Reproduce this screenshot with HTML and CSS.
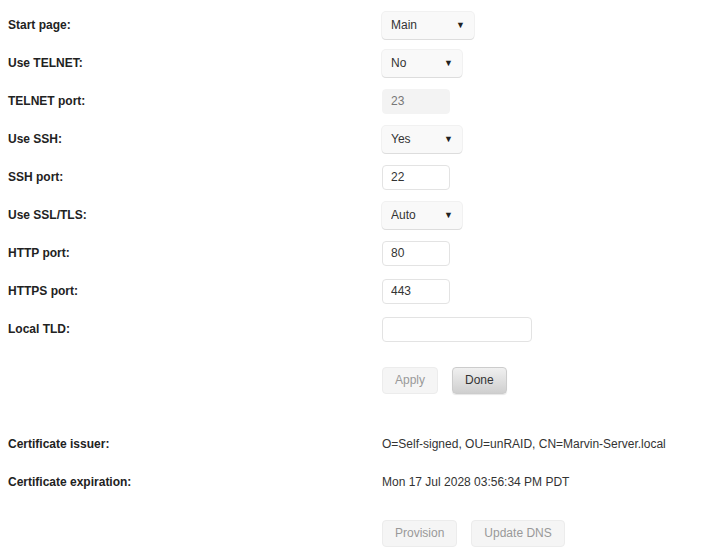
FILE: index.html
```html
<!DOCTYPE html>
<html>
	<head>
		<meta charset="utf-8">
		<title>Management Access</title>
		<link rel="stylesheet" href="styles.css">
	</head>
	<body>
		<form class="settings">
			<div class="row">
				<label class="name">Start page:</label>
				<span class="pick wide">
					<select><option>Main</option><option>Dashboard</option></select>
				</span>
			</div>
			<div class="row">
				<label class="name">Use TELNET:</label>
				<span class="pick">
					<select><option>No</option><option>Yes</option></select>
				</span>
			</div>
			<div class="row">
				<label class="name">TELNET port:</label>
				<input type="text" class="port" value="23" disabled>
			</div>
			<div class="row">
				<label class="name">Use SSH:</label>
				<span class="pick">
					<select><option>Yes</option><option>No</option></select>
				</span>
			</div>
			<div class="row">
				<label class="name">SSH port:</label>
				<input type="text" class="port" value="22">
			</div>
			<div class="row">
				<label class="name">Use SSL/TLS:</label>
				<span class="pick">
					<select><option>Auto</option><option>Yes</option><option>No</option></select>
				</span>
			</div>
			<div class="row">
				<label class="name">HTTP port:</label>
				<input type="text" class="port" value="80">
			</div>
			<div class="row">
				<label class="name">HTTPS port:</label>
				<input type="text" class="port" value="443">
			</div>
			<div class="row">
				<label class="name">Local TLD:</label>
				<input type="text" class="tld" value="">
			</div>
			<div class="row actions">
				<span class="name"></span>
				<button type="button" disabled>Apply</button>
				<button type="button" class="done">Done</button>
			</div>

			<div class="row cert">
				<span class="name">Certificate issuer:</span>
				<span class="value">O=Self-signed, OU=unRAID, CN=Marvin-Server.local</span>
			</div>
			<div class="row">
				<span class="name">Certificate expiration:</span>
				<span class="value">Mon 17 Jul 2028 03:56:34 PM PDT</span>
			</div>
			<div class="row provision">
				<span class="name"></span>
				<button type="button" disabled>Provision</button>
				<button type="button" disabled>Update DNS</button>
			</div>
		</form>
	</body>
</html>
```

FILE: styles.css
```css
*{margin: 0;padding: 0;box-sizing: border-box;}
html,
body{width: 100%;height: 100%;overflow: hidden;background-color: #fff;}
body{font-family: "Liberation Sans", Arial, sans-serif;font-size: 12px;color: #333;}
.settings{padding: 6px 0 0 8px;}
.row{display: flex;align-items: center;height: 38px;}
.name{width: 374px;flex: none;font-weight: bold;color: #222;}
.value{color: #333;}

/* select boxes with their own arrow */
.pick{position: relative;display: inline-block;width: 80px;height: 27px;}
.pick.wide{width: 92px;}
.pick select{appearance: none;-webkit-appearance: none;width: 100%;height: 100%;
	font-family: inherit;font-size: 12px;color: #333;padding: 0 20px 0 9px;
	background-color: #f9f9f9;border: none;border-radius: 4px;
	box-shadow: 0 1px 0 #ddd, 0 0 0 1px #f1f1f1;outline: none;}
.pick::after{content: "\25BC";position: absolute;right: 9px;top: 8px;font-size: 9px;
	color: #222;pointer-events: none;}

input[type=text]{height: 25px;font-family: inherit;font-size: 12px;color: #333;
	padding: 0 8px;border: 1px solid #e3e3e3;border-radius: 4px;background-color: #fff;outline: none;}
input.port{width: 68px;}
input.tld{width: 150px;}
input[disabled]{background-color: #f3f3f3;border-color: #f3f3f3;color: #777;}

button{height: 27px;padding: 0 12px;margin-right: 14px;font-family: inherit;font-size: 12px;
	border: 1px solid #ececec;border-radius: 4px;background-color: #f5f5f5;color: #999;}
button.done{color: #333;border-color: #ccc;background: linear-gradient(#f0f0f0, #cfcfcf);
	box-shadow: 0 1px 1px rgba(0,0,0,0.1);}
.actions{margin-top: 13px;}
.cert{margin-top: 26px;}
.provision{margin-top: 13px;}
```
